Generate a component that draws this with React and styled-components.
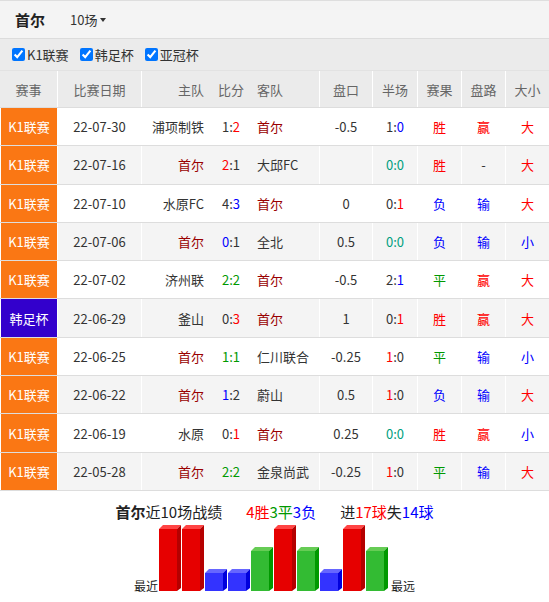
import React from "react";
import styled, { createGlobalStyle } from "styled-components";

const GlobalStyle = createGlobalStyle`
  body {
    margin: 0;
    background: #fff;
    font-family: "Noto Sans CJK SC", "Noto Sans", sans-serif;
    color: #333;
  }
`;

const RED = "#ff0000";
const BLUE = "#0000ff";
const GREEN = "#009900";
const TEAL = "#009f80";
const SEOUL = "首尔";

const rows = [
  { lg: "K1联赛", date: "22-07-30", home: "浦项制铁", score: [1, 2], away: "首尔", pk: "-0.5", half: [1, 0], res: "胜", pl: "赢", dx: "大" },
  { lg: "K1联赛", date: "22-07-16", home: "首尔", score: [2, 1], away: "大邱FC", pk: "", half: [0, 0], res: "胜", pl: "-", dx: "大" },
  { lg: "K1联赛", date: "22-07-10", home: "水原FC", score: [4, 3], away: "首尔", pk: "0", half: [0, 1], res: "负", pl: "输", dx: "大" },
  { lg: "K1联赛", date: "22-07-06", home: "首尔", score: [0, 1], away: "全北", pk: "0.5", half: [0, 0], res: "负", pl: "输", dx: "小" },
  { lg: "K1联赛", date: "22-07-02", home: "济州联", score: [2, 2], away: "首尔", pk: "-0.5", half: [2, 1], res: "平", pl: "赢", dx: "大" },
  { lg: "韩足杯", date: "22-06-29", home: "釜山", score: [0, 3], away: "首尔", pk: "1", half: [0, 1], res: "胜", pl: "赢", dx: "大", cup: true },
  { lg: "K1联赛", date: "22-06-25", home: "首尔", score: [1, 1], away: "仁川联合", pk: "-0.25", half: [1, 0], res: "平", pl: "输", dx: "小" },
  { lg: "K1联赛", date: "22-06-22", home: "首尔", score: [1, 2], away: "蔚山", pk: "0.5", half: [1, 0], res: "负", pl: "输", dx: "大" },
  { lg: "K1联赛", date: "22-06-19", home: "水原", score: [0, 1], away: "首尔", pk: "0.25", half: [0, 0], res: "胜", pl: "赢", dx: "小" },
  { lg: "K1联赛", date: "22-05-28", home: "首尔", score: [2, 2], away: "金泉尚武", pk: "-0.25", half: [1, 0], res: "平", pl: "输", dx: "大" },
];

const resultColor = { 胜: RED, 负: BLUE, 平: GREEN, 赢: RED, 输: BLUE, 大: RED, 小: BLUE, "-": "#333" };

const COLS = "58px 84px 178px 53px 45px 44px 44px 43px";

const TopBar = styled.div`
  height: 37px;
  border-top: 1px solid #dedede;
  background: #f4f4f4;
  display: flex;
  align-items: center;
  padding-left: 15px;
  gap: 25px;
`;

const TeamTitle = styled.span`
  font-size: 15px;
  font-weight: bold;
  color: #222;
`;

const CountSelect = styled.span`
  font-size: 13px;
  color: #333;
  display: flex;
  align-items: center;
  gap: 3px;
  &::after {
    content: "";
    border-left: 3.5px solid transparent;
    border-right: 3.5px solid transparent;
    border-top: 4px solid #333;
    margin-top: 1px;
  }
`;

const FilterBar = styled.div`
  height: 31px;
  border-top: 1px solid #dcdcdc;
  background: #ebebeb;
  display: flex;
  align-items: center;
  padding-left: 12px;
  gap: 11px;
`;

const FilterLabel = styled.label`
  display: flex;
  align-items: center;
  font-size: 13px;
  color: #333;
  input {
    width: 13px;
    height: 13px;
    margin: 0 2px 0 0;
  }
`;

const Row = styled.div`
  display: grid;
  grid-template-columns: ${COLS};
  height: ${(p) => (p.$head ? "38px" : "38.3px")};
  box-sizing: border-box;
  border-bottom: 1px solid #dddddd;
  border-top: ${(p) => (p.$head ? "1px solid #e2e2e2" : "none")};
  background: ${(p) => (p.$head ? "#ebebeb" : p.$odd ? "#f4f4f4" : "#fff")};
  font-size: 13px;
  color: ${(p) => (p.$head ? "#666" : "#333")};
`;

const Cell = styled.div`
  display: flex;
  align-items: center;
  justify-content: center;
  border-right: 1px solid #fff;
  &:last-child {
    border-right: none;
  }
`;

const LeagueCell = styled(Cell)`
  background: ${(p) => (p.$cup ? "#3300cc" : "#fa7714")};
  color: #fff;
  border-left: 1px solid #fff;
`;

const TeamsCell = styled.div`
  display: grid;
  grid-template-columns: 70px 38px 70px;
  align-items: center;
  border-right: 1px solid #fff;
`;

const Home = styled.span`
  text-align: right;
  padding-right: 8px;
  color: ${(p) => (p.$seoul ? "#990000" : "inherit")};
`;

const Score = styled.span`
  text-align: center;
  color: ${(p) => p.$color || "inherit"};
`;

const Away = styled.span`
  text-align: left;
  padding-left: 7px;
  color: ${(p) => (p.$seoul ? "#990000" : "inherit")};
  white-space: nowrap;
`;

const Mark = styled.span`
  color: ${(p) => p.$color};
`;

const Summary = styled.div`
  padding-top: 11px;
  display: flex;
  flex-direction: column;
  align-items: center;
`;

const SummaryLine = styled.div`
  display: flex;
  gap: 24px;
  font-size: 15px;
  line-height: 20px;
  color: #222;
  b {
    font-weight: bold;
  }
`;

const ChartRow = styled.div`
  display: flex;
  align-items: flex-end;
  margin-top: 3px;
`;

const AxisLabel = styled.span`
  font-size: 12px;
  line-height: 15px;
  color: #222;
  margin-bottom: -1px;
`;

function ScoreText({ pair, seoulHome, drawColor }) {
  const [h, a] = pair;
  if (h === a) {
    return <Score $color={drawColor}>{h}:{a}</Score>;
  }
  const seoulGoals = seoulHome ? h : a;
  const other = seoulHome ? a : h;
  const c = seoulGoals > other ? RED : BLUE;
  return (
    <Score>
      {seoulHome ? <Mark $color={c}>{h}</Mark> : h}:
      {seoulHome ? a : <Mark $color={c}>{a}</Mark>}
    </Score>
  );
}

const barStyle = {
  胜: { h: 62, front: "#e60000", side: "#b50000", top: "#ff4444" },
  平: { h: 40, front: "#33bb33", side: "#009900", top: "#66cc55" },
  负: { h: 18, front: "#3333ff", side: "#0000dd", top: "#6666ff" },
};

function BarChart({ results }) {
  const H = 67;
  const base = H - 1;
  return (
    <svg width="233" height={H} viewBox={`0 0 233 ${H}`}>
      {results.map((r, i) => {
        const s = barStyle[r];
        const x = i * 23 + 1;
        const top = base - s.h;
        return (
          <g key={i}>
            <rect x={x} y={top} width="18" height={s.h} fill={s.front} />
            <polygon points={`${x},${top} ${x + 4},${top - 4} ${x + 22},${top - 4} ${x + 18},${top}`} fill={s.top} />
            <polygon points={`${x + 18},${top} ${x + 22},${top - 4} ${x + 22},${base - 3} ${x + 18},${base}`} fill={s.side} />
          </g>
        );
      })}
    </svg>
  );
}

export default function App() {
  return (
    <>
      <GlobalStyle />
      <TopBar>
        <TeamTitle>首尔</TeamTitle>
        <CountSelect>10场</CountSelect>
      </TopBar>
      <FilterBar>
        {["K1联赛", "韩足杯", "亚冠杯"].map((l) => (
          <FilterLabel key={l}>
            <input type="checkbox" defaultChecked />
            {l}
          </FilterLabel>
        ))}
      </FilterBar>
      <Row $head>
        <Cell>赛事</Cell>
        <Cell>比赛日期</Cell>
        <TeamsCell>
          <Home>主队</Home>
          <Score>比分</Score>
          <Away>客队</Away>
        </TeamsCell>
        <Cell>盘口</Cell>
        <Cell>半场</Cell>
        <Cell>赛果</Cell>
        <Cell>盘路</Cell>
        <Cell>大小</Cell>
      </Row>
      {rows.map((r, i) => {
        const seoulHome = r.home === SEOUL;
        return (
          <Row key={i} $odd={i % 2 === 1}>
            <LeagueCell $cup={r.cup}>{r.lg}</LeagueCell>
            <Cell>{r.date}</Cell>
            <TeamsCell>
              <Home $seoul={seoulHome}>{r.home}</Home>
              <ScoreText pair={r.score} seoulHome={seoulHome} drawColor={GREEN} />
              <Away $seoul={!seoulHome}>{r.away}</Away>
            </TeamsCell>
            <Cell>{r.pk}</Cell>
            <Cell>
              <ScoreText pair={r.half} seoulHome={seoulHome} drawColor={TEAL} />
            </Cell>
            <Cell><Mark $color={resultColor[r.res]}>{r.res}</Mark></Cell>
            <Cell><Mark $color={resultColor[r.pl]}>{r.pl}</Mark></Cell>
            <Cell><Mark $color={resultColor[r.dx]}>{r.dx}</Mark></Cell>
          </Row>
        );
      })}
      <Summary>
        <SummaryLine>
          <span><b>首尔</b>近10场战绩</span>
          <span>
            <Mark $color={RED}>4胜</Mark>
            <Mark $color={GREEN}>3平</Mark>
            <Mark $color={BLUE}>3负</Mark>
          </span>
          <span>
            进<Mark $color={RED}>17球</Mark>失<Mark $color={BLUE}>14球</Mark>
          </span>
        </SummaryLine>
        <ChartRow>
          <AxisLabel>最近</AxisLabel>
          <BarChart results={rows.map((r) => r.res)} />
          <AxisLabel>最远</AxisLabel>
        </ChartRow>
      </Summary>
    </>
  );
}
